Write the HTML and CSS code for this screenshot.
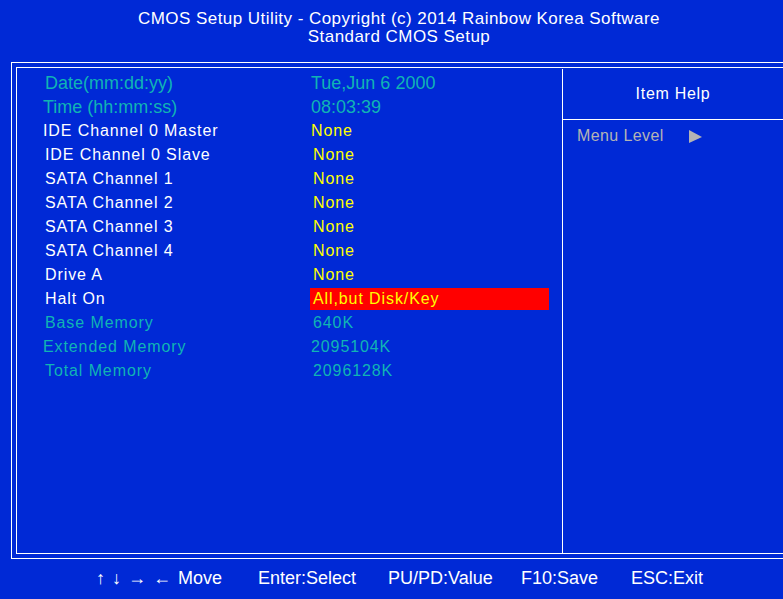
FILE: index.html
```html
<!DOCTYPE html>
<html>
<head>
<meta charset="utf-8">
<link rel="stylesheet" href="styles.css">
</head>
<body>
<header class="top">
  <div class="title">CMOS Setup Utility - Copyright (c) 2014 Rainbow Korea Software</div>
  <div class="title">Standard CMOS Setup</div>
</header>
<div class="frame">
  <div class="inner">
    <div class="main">
      <div class="row smooth"><span class="label">Date(mm:dd:yy)</span><span class="value cyan nudge">Tue,Jun 6 2000</span></div>
      <div class="row smooth"><span class="label nudge">Time (hh:mm:ss)</span><span class="value cyan nudge">08:03:39</span></div>
      <div class="row"><span class="label white nudge">IDE Channel 0 Master</span><span class="value yellow nudge">None</span></div>
      <div class="row"><span class="label white">IDE Channel 0 Slave</span><span class="value yellow">None</span></div>
      <div class="row"><span class="label white">SATA Channel 1</span><span class="value yellow">None</span></div>
      <div class="row"><span class="label white">SATA Channel 2</span><span class="value yellow">None</span></div>
      <div class="row"><span class="label white">SATA Channel 3</span><span class="value yellow">None</span></div>
      <div class="row"><span class="label white">SATA Channel 4</span><span class="value yellow">None</span></div>
      <div class="row"><span class="label white">Drive A</span><span class="value yellow">None</span></div>
      <div class="row"><span class="label white">Halt On</span><span class="value yellow selected">All,but Disk/Key</span></div>
      <div class="row"><span class="label">Base Memory</span><span class="value cyan">640K</span></div>
      <div class="row"><span class="label nudge">Extended Memory</span><span class="value cyan nudge">2095104K</span></div>
      <div class="row"><span class="label">Total Memory</span><span class="value cyan">2096128K</span></div>
    </div>
    <div class="help">
      <div class="help-head">Item Help</div>
      <div class="menu-level"><span>Menu Level</span><span class="tri"></span></div>
    </div>
  </div>
</div>
<footer class="keys">
  <span class="key move">↑ ↓ → ← Move</span>
  <span class="key">Enter:Select</span>
  <span class="key">PU/PD:Value</span>
  <span class="key">F10:Save</span>
  <span class="key">ESC:Exit</span>
</footer>
</body>
</html>
```
FILE: styles.css
```css
html, body {
  margin: 0;
  padding: 0;
}
body {
  background: #0029d6;
  color: #ffffff;
  width: 783px;
  height: 599px;
  overflow: hidden;
  font-family: "Liberation Sans", Arial, sans-serif;
}
.top {
  padding-top: 10px;
  padding-left: 15px;
  text-align: center;
  font-size: 17px;
  letter-spacing: 0.45px;
}
.title {
  height: 18px;
  line-height: 18px;
}
.frame {
  margin-top: 16px;
  margin-left: 11px;
  width: 820px;
  height: 487px;
  border: 1px solid #fff;
  padding: 4px;
}
.inner {
  height: 485px;
  border: 1px solid #fff;
  display: flex;
}
.main {
  width: 545px;
  padding-top: 3px;
  color: #10b4b4;
}
.row {
  height: 24px;
  display: flex;
  align-items: center;
  font-size: 16px;
  letter-spacing: 0.9px;
}
.row.smooth {
  font-size: 18px;
  letter-spacing: 0;
}
.label {
  width: 265px;
  margin-left: 28px;
  white-space: nowrap;
}
.label.nudge {
  margin-left: 26px;
  width: 267px;
}
.value {
  padding-left: 3px;
  white-space: nowrap;
}
.value.nudge { margin-left: -2px; }
.white { color: #ffffff; }
.yellow { color: #ffff00; }
.cyan { color: #10b4b4; }
.selected {
  background: #ff0000;
  width: 236px;
  height: 22px;
  line-height: 22px;
}
.help {
  flex: 1;
  margin-top: 1px;
  border-left: 1px solid #fff;
}
.help-head {
  width: 220px;
  height: 50px;
  border-bottom: 1px solid #fff;
  display: flex;
  align-items: center;
  justify-content: center;
  font-size: 16px;
  letter-spacing: 0.7px;
}
.menu-level {
  margin-top: 6px;
  padding-left: 14px;
  height: 20px;
  display: flex;
  align-items: center;
  gap: 25px;
  color: #b4b4b4;
  font-size: 16px;
  letter-spacing: 0.4px;
}
.tri {
  width: 0;
  height: 0;
  border-left: 13px solid #b4b4b4;
  border-top: 7px solid transparent;
  border-bottom: 6px solid transparent;
}
.keys {
  margin-top: 9px;
  padding-left: 96px;
  display: grid;
  grid-template-columns: 162px 130px 133px 110px auto;
  font-size: 18px;
  line-height: 20px;
  white-space: nowrap;
}
.key.move {
  word-spacing: 2px;
}
```
